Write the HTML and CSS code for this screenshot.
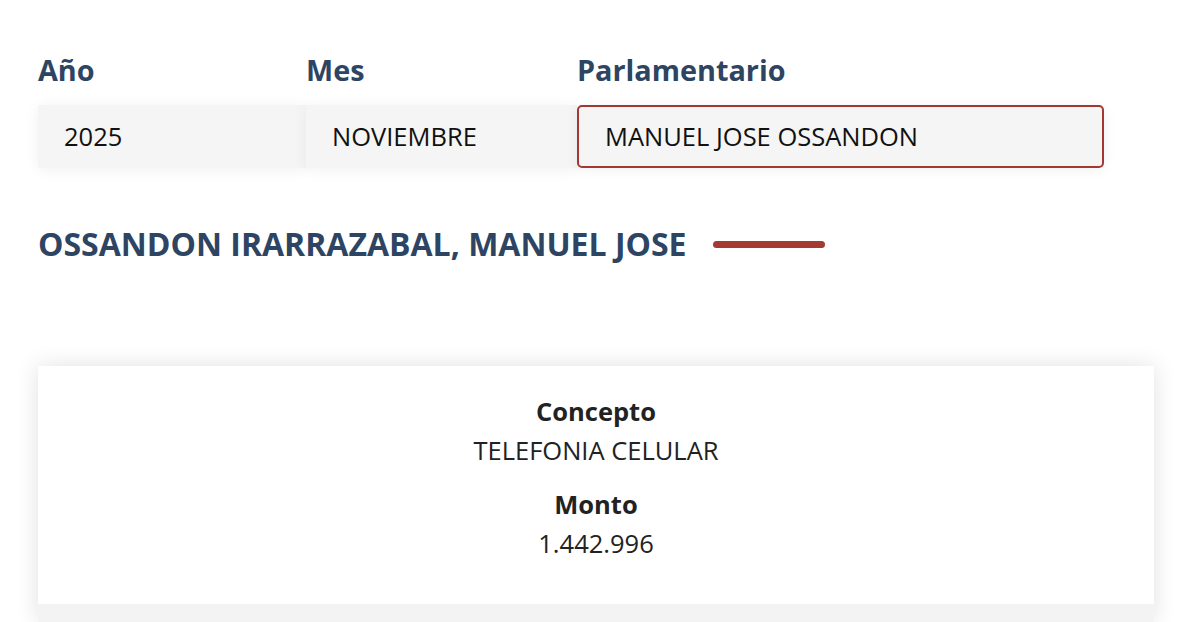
FILE: index.html
```html
<!DOCTYPE html>
<html lang="es">
<head>
<meta charset="utf-8">
<title>Gastos parlamentarios</title>
<link rel="stylesheet" href="styles.css">
</head>
<body>
<main class="page">
  <section class="filters">
    <div class="field">
      <label class="field-label">Año</label>
      <div class="select">2025</div>
    </div>
    <div class="field">
      <label class="field-label">Mes</label>
      <div class="select">NOVIEMBRE</div>
    </div>
    <div class="field">
      <label class="field-label">Parlamentario</label>
      <div class="select select-active">MANUEL JOSE OSSANDON</div>
    </div>
  </section>
  <h1 class="title"><span>OSSANDON IRARRAZABAL, MANUEL JOSE</span><span class="title-bar"></span></h1>
  <section class="card">
    <div class="row">
      <div class="item">
        <div class="item-label">Concepto</div>
        <div class="item-value">TELEFONIA CELULAR</div>
      </div>
      <div class="item">
        <div class="item-label">Monto</div>
        <div class="item-value">1.442.996</div>
      </div>
    </div>
    <div class="row row-alt"></div>
  </section>
</main>
</body>
</html>
```

FILE: styles.css
```css
* { box-sizing: border-box; }
html, body { margin: 0; padding: 0; background: #fff; }
body { font-family: "Open Sans", "Noto Sans", sans-serif; color: #111; overflow: hidden; height: 622px; }
.page { padding: 52px 45px 0 38px; }
.filters {
  display: grid;
  grid-template-columns: 268px 271px 527px;
}
.field { display: flex; flex-direction: column; }
.field-label {
  font-size: 28.8px;
  font-weight: 700;
  color: #2d4562;
  line-height: 36px;
  margin-bottom: 17px;
}
.select {
  height: 63px;
  background: #f5f5f5;
  font-size: 25.5px;
  line-height: 63px;
  padding-left: 26px;
  color: #111;
  box-shadow: 0 2px 14px rgba(0,0,0,0.06);
}
.select-active {
  border: 2px solid #a33832;
  border-radius: 5px;
  line-height: 59px;
  padding-left: 26px;
}
.title {
  display: flex;
  align-items: center;
  gap: 26px;
  margin: 56px 0 0;
  font-size: 32px;
  font-weight: 700;
  color: #2d4562;
  line-height: 40px;
}
.title-bar {
  width: 112px;
  height: 7px;
  border-radius: 4px;
  background: #a33b34;
}
.card {
  margin-top: 102px;
  width: 1116px;
  background: #fff;
  box-shadow: 0 0 22px rgba(0,0,0,0.12);
}
.row {
  padding: 26px 0 0;
  display: flex;
  flex-direction: column;
  align-items: center;
  gap: 15px;
  height: 238px;
}
.row-alt { background: #f3f3f3; height: 18px; padding: 0; }
.item { text-align: center; font-size: 25.5px; line-height: 39px; }
.item-label { font-weight: 700; color: #222; }
.item-value { color: #222; }
```
